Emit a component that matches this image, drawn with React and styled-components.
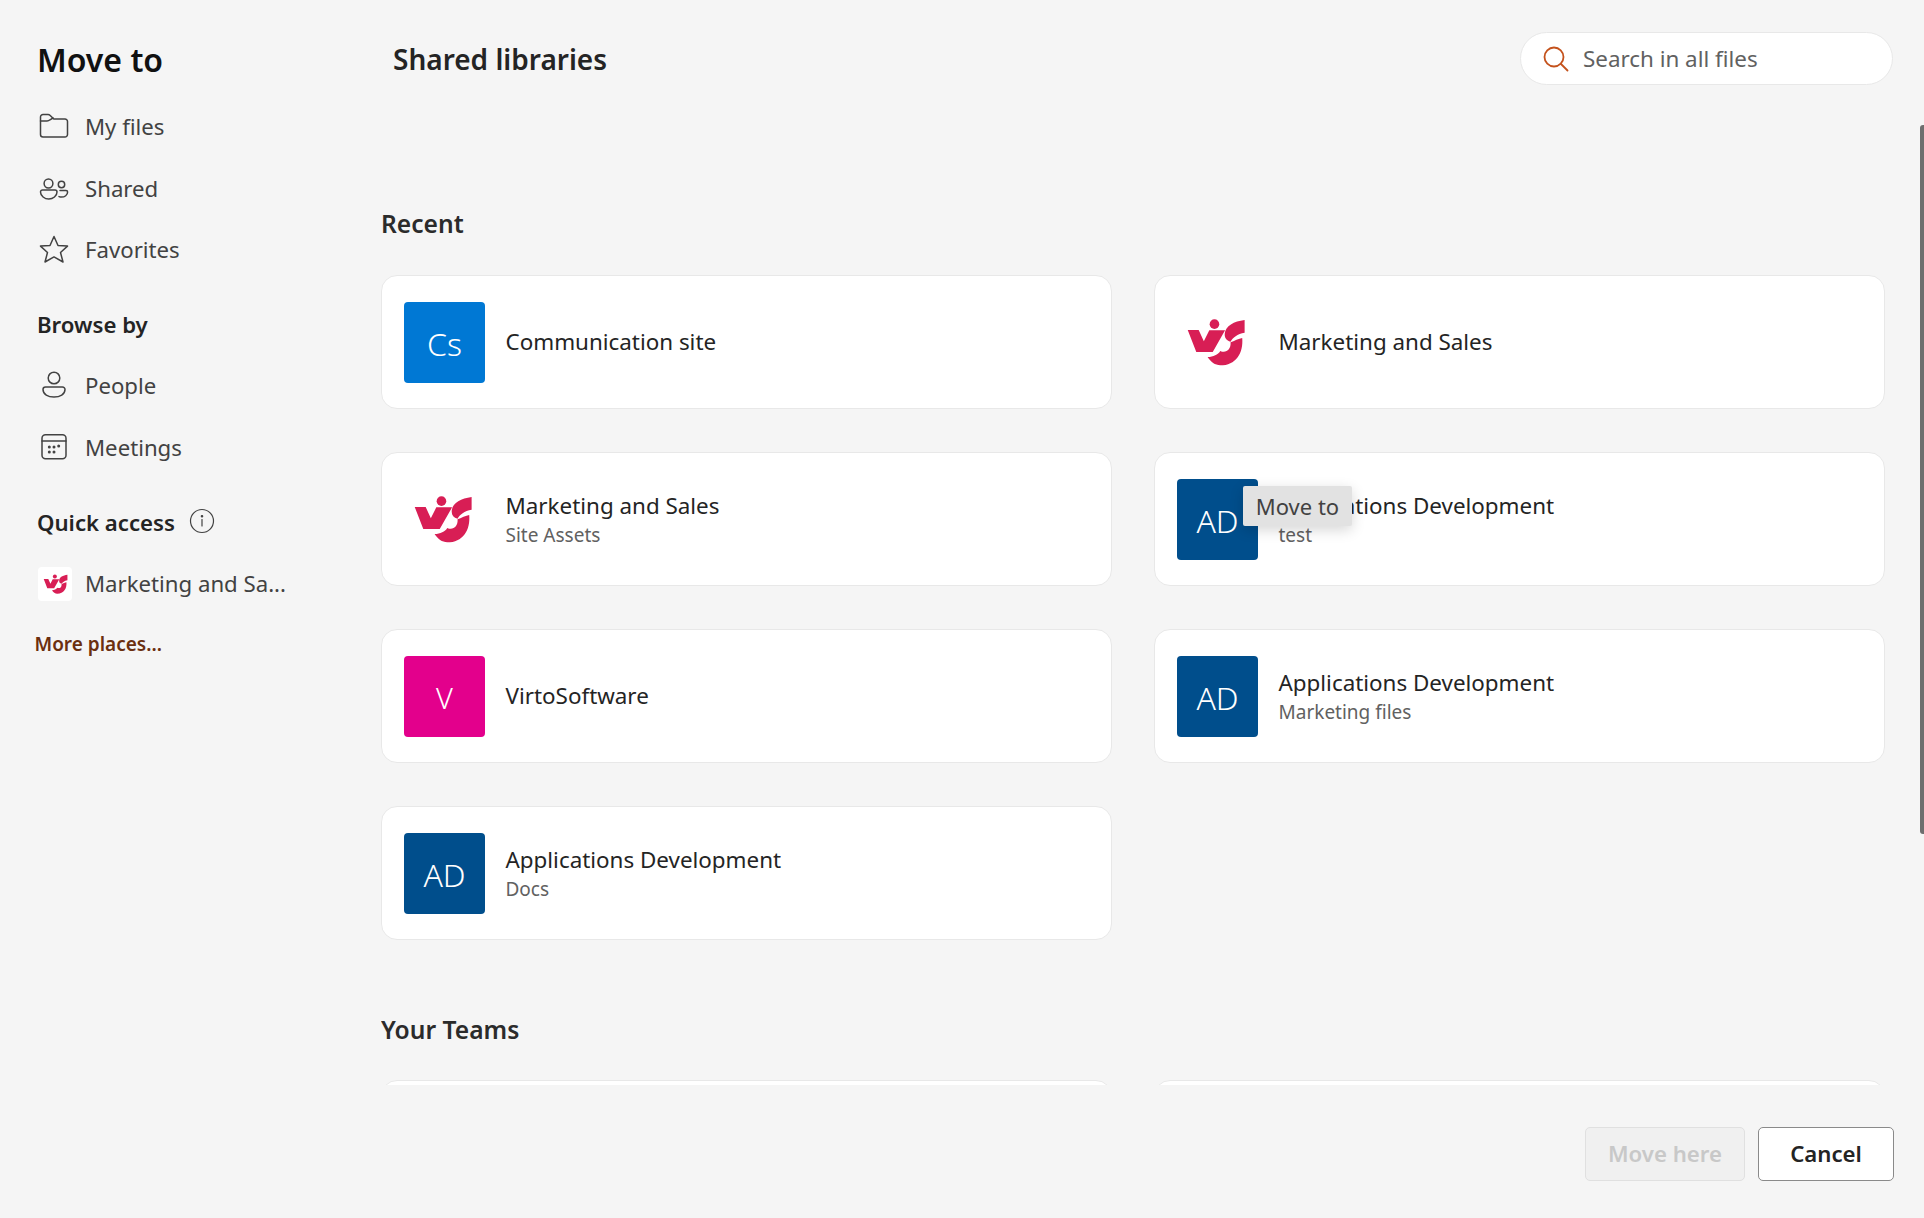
import React from "react";
import styled, { createGlobalStyle } from "styled-components";

const GlobalStyle = createGlobalStyle`
    html, body {
        margin: 0;
        padding: 0;
        background: #f5f5f5;
        overflow: hidden;
    }
    * {
        box-sizing: border-box;
    }
`;

const FONT = `"Noto Sans", "Open Sans", "Liberation Sans", sans-serif`;

const IconSvg = styled.svg`
    width: 30px;
    height: 30px;
    flex: none;
    fill: none;
    stroke: #424242;
    stroke-width: 1.5;
    stroke-linejoin: round;
    stroke-linecap: round;
`;

const FolderIcon = () => (
    <IconSvg viewBox="0 0 30 30">
        <path d="M1.5 5a2.5 2.5 0 0 1 2.500-2.500h5c1 0 1.600.4 2.200 1L14.800 7H26a2.500 2.500 0 0 1 2.500 2.500v13A2.500 2.500 0 0 1 26 25H4a2.500 2.500 0 0 1-2.500-2.500z" />
        <path d="M1.5 9H8c1.200 0 2-.3 3-1.200L14 6" />
    </IconSvg>
);

const SharedIcon = () => (
    <IconSvg viewBox="0 0 30 30">
        <circle cx="9.500" cy="10.500" r="4.400" />
        <path d="M3.500 17h12.500a2 2 0 0 1 2 2c0 4-4 7-8.200 7S1.500 23 1.500 19a2 2 0 0 1 2-2z" />
        <circle cx="22.500" cy="11.500" r="3.200" />
        <path d="M21 17.500h6a1.600 1.600 0 0 1 1.600 1.600c0 3-3 5-6 5-1 0-1.800-.2-2.600-.5" />
    </IconSvg>
);

const StarIcon = () => (
    <IconSvg viewBox="0 0 30 30">
        <path d="M15 1.500l4 9 9.500.6-7 6.400 2.500 9.500-9-5.100-9 5.100 2.500-9.500-7-6.400 9.500-.6z" />
    </IconSvg>
);

const PersonIcon = () => (
    <IconSvg viewBox="0 0 30 30">
        <circle cx="15" cy="7" r="5.800" />
        <path d="M6.500 16h17a2.500 2.500 0 0 1 2.500 2.500c0 4.700-5 7.500-11 7.500S4 23.200 4 18.500A2.500 2.500 0 0 1 6.500 16z" />
    </IconSvg>
);

const CalendarIcon = () => (
    <IconSvg viewBox="0 0 30 30">
        <rect x="3" y="2.800" width="24" height="24" rx="3.500" />
        <path d="M3 9h24" />
        <g fill="#424242" stroke="none">
            <circle cx="10.300" cy="15" r="1.500" />
            <circle cx="15" cy="15" r="1.500" />
            <circle cx="19.700" cy="14" r="1.500" />
            <circle cx="10.300" cy="20" r="1.500" />
            <circle cx="15" cy="20" r="1.500" />
        </g>
    </IconSvg>
);

const InfoSvg = styled(IconSvg)`
    width: 26px;
    height: 26px;
    stroke-width: 1.2;
    margin-top: -3px;
`;

const InfoIcon = () => (
    <InfoSvg viewBox="0 0 26 26">
        <circle cx="13" cy="13" r="11.500" />
        <path d="M13 11.500v6.500" />
        <circle cx="13" cy="8.300" r=".7" fill="#424242" />
    </InfoSvg>
);

const SearchSvg = styled(IconSvg)`
    width: 26px;
    height: 26px;
    stroke: #c4521c;
    stroke-width: 1.8;
`;

const SearchIcon = () => (
    <SearchSvg viewBox="0 0 26 26">
        <circle cx="11" cy="11" r="9.500" />
        <path d="M18 18l6.500 6.500" />
    </SearchSvg>
);

const LogoSvg = styled.svg`
    display: block;
    width: ${(props) => props.$width}px;
    flex: none;
    fill: #d81e55;
`;

const VisLogo = ({ width }) => (
    <LogoSvg $width={width} viewBox="50 32 175 142">
        <circle cx="133" cy="50" r="14" />
        <path d="M55 67H87L102 100L118 68H164L128 131H80Z" />
        <path d="M221 38C190 42 165 55 163 78C162 90 168 98 180 101C186 90 200 78 221 75Z" />
        <path d="M180 103C190 98 205 92 214 90C218 135 195 170 150 170C135 170 122 160 113 146C130 144 143 140 150 128C165 136 182 125 180 103Z" />
    </LogoSvg>
);

const recent = [
    { id: 1, tile: "Cs", color: "#0078d4", name: "Communication site" },
    { id: 2, logo: true, name: "Marketing and Sales" },
    { id: 3, logo: true, name: "Marketing and Sales", sub: "Site Assets" },
    { id: 4, tile: "AD", color: "#004e8c", name: "Applications Development", sub: "test", tooltip: true },
    { id: 5, tile: "V", color: "#e3008c", size: 29, name: "VirtoSoftware" },
    { id: 6, tile: "AD", color: "#004e8c", name: "Applications Development", sub: "Marketing files" },
    { id: 7, tile: "AD", color: "#004e8c", name: "Applications Development", sub: "Docs" },
];

const LibraryCard = ({ item }) => (
    <Card>
        {item.logo ? (
            <LogoTile>
                <VisLogo width={60} />
            </LogoTile>
        ) : (
            <Tile $bg={item.color} $size={item.size}>
                {item.tile}
            </Tile>
        )}
        <CardText>
            <CardName>{item.name}</CardName>
            {item.sub && <CardSub>{item.sub}</CardSub>}
        </CardText>
        {item.tooltip && <Tooltip>Move to</Tooltip>}
    </Card>
);

const App = () => {
    return (
        <Page>
            <GlobalStyle />
            <Sidebar>
                <DialogTitle>Move to</DialogTitle>
                <NavList>
                    <NavRow>
                        <FolderIcon />
                        <NavLabel>My files</NavLabel>
                    </NavRow>
                    <NavRow>
                        <SharedIcon />
                        <NavLabel>Shared</NavLabel>
                    </NavRow>
                    <NavRow>
                        <StarIcon />
                        <NavLabel>Favorites</NavLabel>
                    </NavRow>
                </NavList>
                <SideHeading $top={18.5}>Browse by</SideHeading>
                <NavList $top={6}>
                    <NavRow>
                        <PersonIcon />
                        <NavLabel>People</NavLabel>
                    </NavRow>
                    <NavRow>
                        <CalendarIcon />
                        <NavLabel>Meetings</NavLabel>
                    </NavRow>
                </NavList>
                <SideHeading $top={19}>
                    Quick access
                    <InfoIcon />
                </SideHeading>
                <NavList $top={6}>
                    <NavRow>
                        <QuickTile>
                            <VisLogo width={25} />
                        </QuickTile>
                        <NavLabel>Marketing and Sa...</NavLabel>
                    </NavRow>
                </NavList>
                <MoreLink>More places...</MoreLink>
            </Sidebar>
            <Main>
                <Header>
                    <LibrariesTitle>Shared libraries</LibrariesTitle>
                    <SearchBox>
                        <SearchIcon />
                        <SearchText>Search in all files</SearchText>
                    </SearchBox>
                </Header>
                <ScrollArea>
                    <SectionTitle $top={120}>Recent</SectionTitle>
                    <CardGrid>
                        {recent.map((item) => (
                            <LibraryCard key={item.id} item={item} />
                        ))}
                    </CardGrid>
                    <SectionTitle $top={70}>Your Teams</SectionTitle>
                    <CardGrid>
                        <Card />
                        <Card />
                    </CardGrid>
                </ScrollArea>
                <Footer>
                    <MoveButton disabled>Move here</MoveButton>
                    <CancelButton>Cancel</CancelButton>
                </Footer>
                <ScrollThumb />
            </Main>
        </Page>
    );
};

export default App;

const Page = styled.div`
    display: flex;
    width: 1924px;
    height: 1218px;
    background: #f5f5f5;
    font-family: ${FONT};
    color: #242424;
    overflow: hidden;
`;

const Sidebar = styled.aside`
    width: 381px;
    flex: none;
    padding: 37px 0 0 37px;
    display: flex;
    flex-direction: column;
`;

const DialogTitle = styled.h1`
    margin: 0;
    height: 46px;
    line-height: 46px;
    font-size: 32px;
    font-weight: 600;
    color: #111;
`;

const NavList = styled.div`
    margin-top: ${(props) => props.$top ?? 13}px;
    display: flex;
    flex-direction: column;
`;

const NavRow = styled.div`
    height: 61.5px;
    display: flex;
    align-items: center;
    gap: 16px;
    padding-left: 2px;
`;

const NavLabel = styled.span`
    font-size: 22.2px;
    color: #424242;
    white-space: nowrap;
`;

const SideHeading = styled.div`
    margin-top: ${(props) => props.$top}px;
    height: 50px;
    display: flex;
    align-items: center;
    gap: 14px;
    font-size: 22.2px;
    font-weight: 600;
    color: #242424;
`;

const QuickTile = styled.div`
    width: 34px;
    height: 34px;
    margin: 0 -3px 0 -1px;
    flex: none;
    display: flex;
    align-items: center;
    justify-content: center;
    background: #fff;
    border-radius: 4px;
`;

const MoreLink = styled.a`
    margin: 14.5px 0 0 -2.5px;
    height: 30px;
    line-height: 30px;
    font-size: 19px;
    font-weight: 600;
    color: #6b2f0f;
`;

const Main = styled.main`
    position: relative;
    flex: 1;
    min-width: 0;
    display: flex;
    flex-direction: column;
`;

const Header = styled.header`
    height: 84px;
    flex: none;
    padding: 32px 31px 0 12px;
    display: flex;
    justify-content: space-between;
    align-items: flex-start;
`;

const LibrariesTitle = styled.h2`
    margin: 0;
    height: 52px;
    line-height: 54px;
    font-size: 28px;
    font-weight: 600;
    color: #242424;
`;

const SearchBox = styled.div`
    width: 373px;
    height: 53px;
    padding-left: 22px;
    display: flex;
    align-items: center;
    gap: 14px;
    background: #fff;
    border: 1.5px solid #e8e8e8;
    border-radius: 27px;
`;

const SearchText = styled.span`
    font-size: 22.4px;
    color: #616161;
`;

const ScrollArea = styled.div`
    height: 1001px;
    flex: none;
    overflow: hidden;
    padding-right: 39px;
`;

const SectionTitle = styled.h3`
    margin: ${(props) => props.$top}px 0 30.5px;
    height: 40px;
    line-height: 40px;
    font-size: 24.6px;
    font-weight: 600;
    color: #2b2b2b;
`;

const CardGrid = styled.div`
    display: grid;
    grid-template-columns: 731px 731px;
    column-gap: 42px;
    row-gap: 43px;
    grid-auto-rows: 134px;
`;

const Card = styled.div`
    position: relative;
    display: flex;
    align-items: center;
    gap: 20.5px;
    padding: 1.5px 0 0 22px;
    background: #fff;
    border: 1.5px solid #e8e8e8;
    border-radius: 16px;
`;

const Tile = styled.div`
    width: 81px;
    height: 81px;
    flex: none;
    display: flex;
    align-items: center;
    justify-content: center;
    background: ${(props) => props.$bg};
    border-radius: 4px;
    color: #fff;
    font-size: ${(props) => props.$size ?? 32}px;
    font-weight: 300;
    padding-top: 2px;
`;

const LogoTile = styled.div`
    width: 81px;
    height: 81px;
    flex: none;
    display: flex;
    align-items: center;
    justify-content: center;
    padding-right: 3px;
`;

const CardText = styled.div`
    display: flex;
    flex-direction: column;
    min-width: 0;
`;

const CardName = styled.div`
    font-size: 22.4px;
    line-height: 32px;
    color: #242424;
`;

const CardSub = styled.div`
    font-size: 19px;
    line-height: 26px;
    color: #616161;
`;

const Tooltip = styled.div`
    position: absolute;
    left: 88px;
    top: 33px;
    width: 109px;
    height: 40px;
    display: flex;
    align-items: center;
    justify-content: center;
    background: #e2e2e2;
    border-radius: 2px;
    box-shadow: 0 4px 14px rgba(0, 0, 0, 0.16);
    font-size: 22px;
    color: #424242;
`;

const Footer = styled.footer`
    flex: 1;
    padding: 42px 30px 0 0;
    display: flex;
    justify-content: flex-end;
    align-items: flex-start;
    gap: 13px;
`;

const MoveButton = styled.button`
    width: 160px;
    height: 54px;
    padding-bottom: 2px;
    font-family: ${FONT};
    font-size: 22.2px;
    font-weight: 600;
    color: #c8c8c8;
    background: #f0f0f0;
    border: 1.5px solid #e0e0e0;
    border-radius: 5px;
`;

const CancelButton = styled(MoveButton)`
    width: 136px;
    color: #242424;
    background: #fff;
    border-color: #8a8a8a;
`;

const ScrollThumb = styled.div`
    position: absolute;
    top: 125px;
    right: 0;
    width: 4px;
    height: 709px;
    background: #6e6e6e;
    border-radius: 3px 0 0 3px;
`;
